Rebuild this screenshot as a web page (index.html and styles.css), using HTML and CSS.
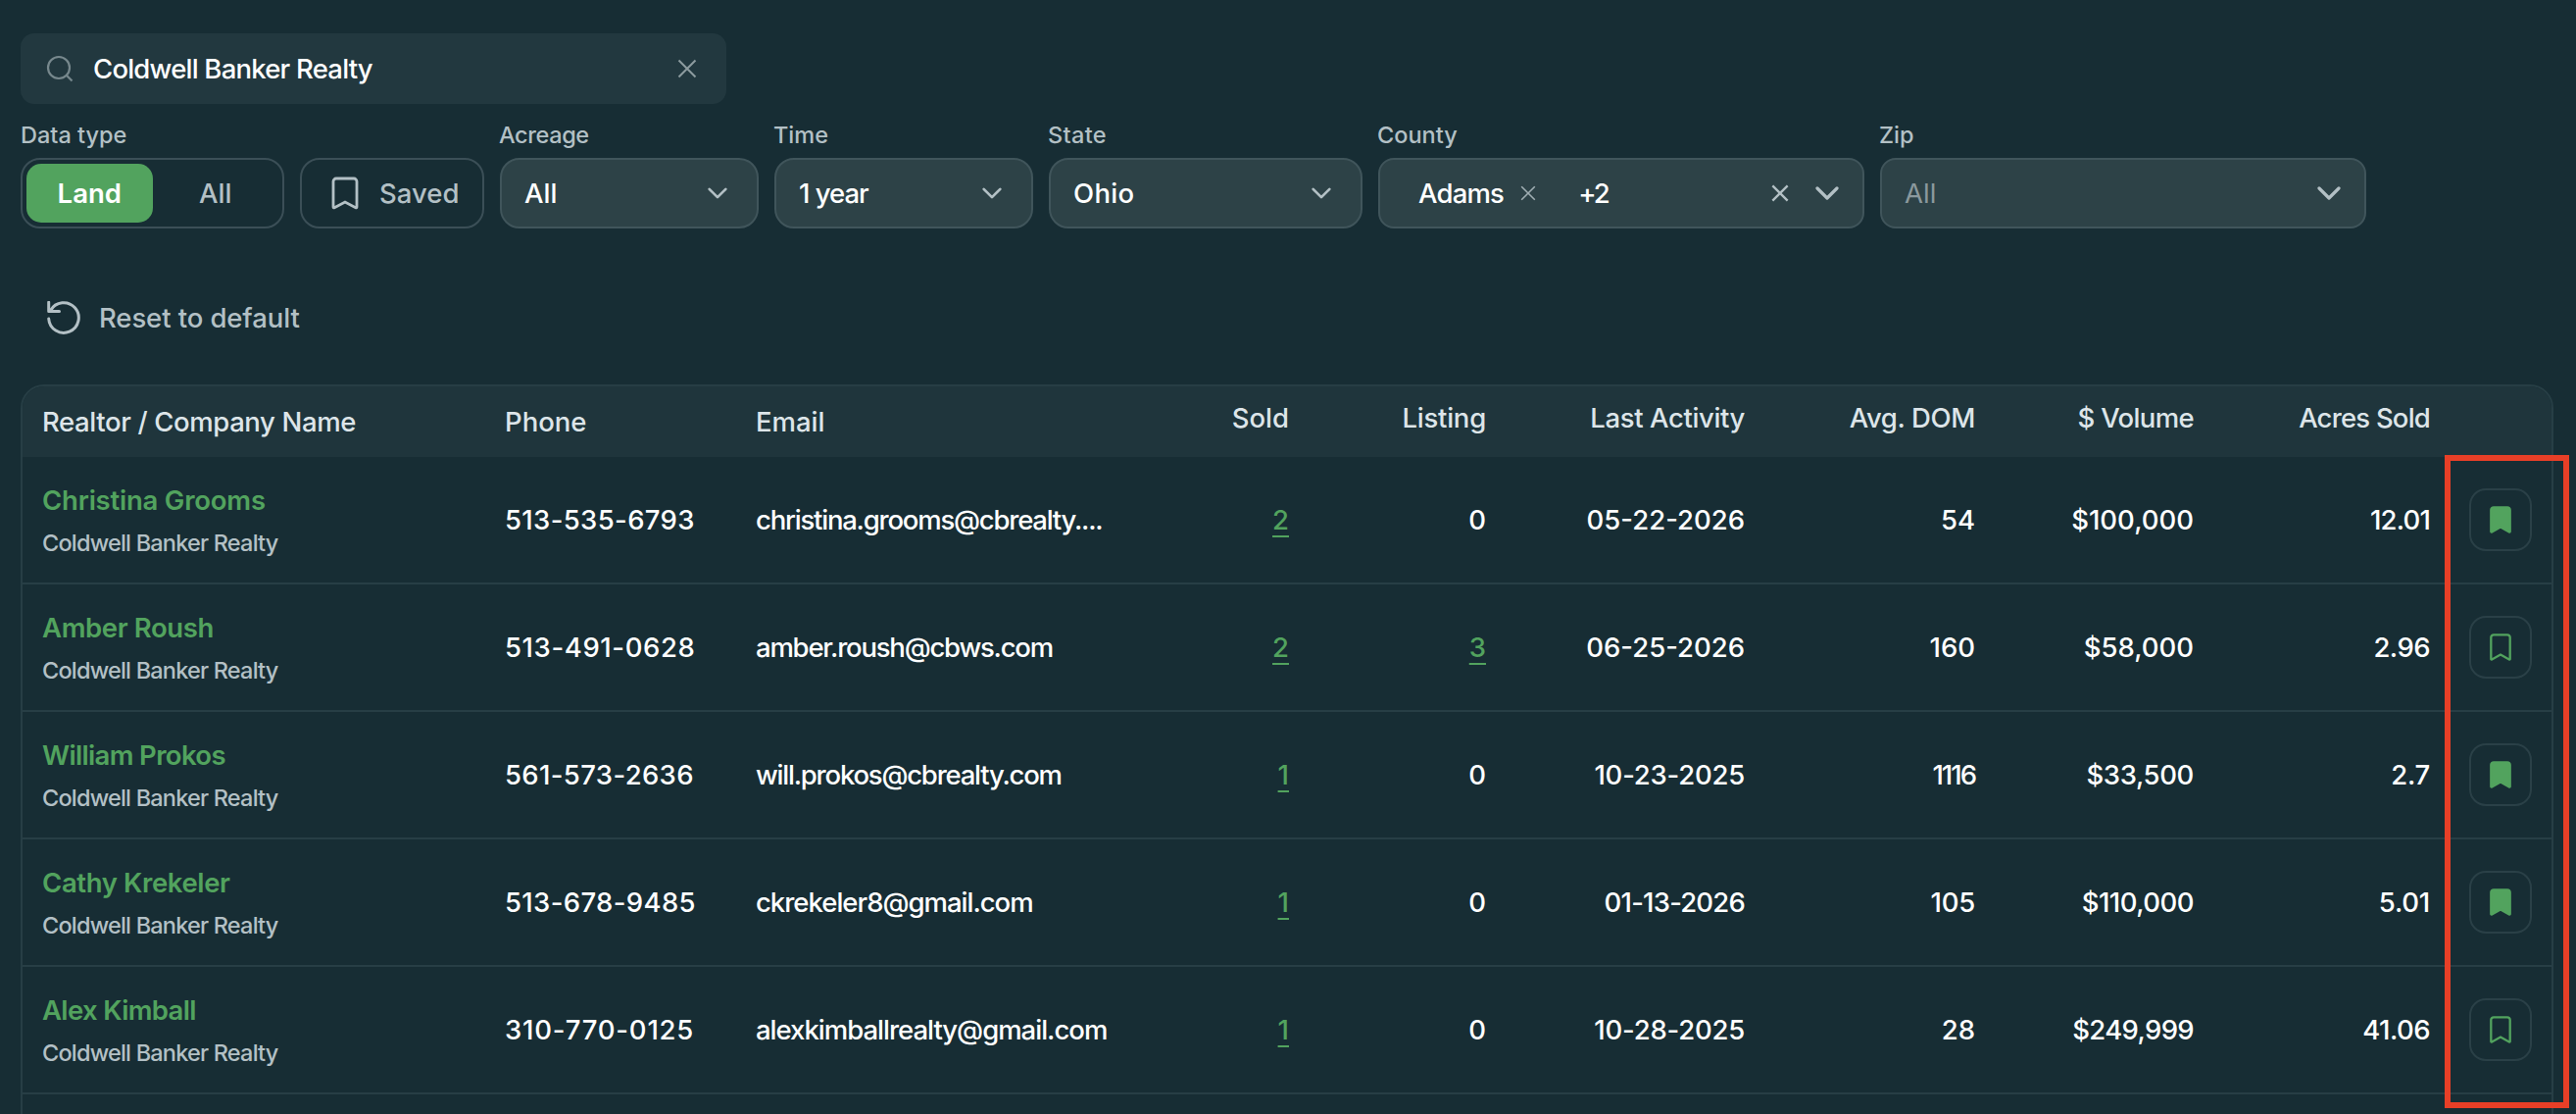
FILE: index.html
```html
<!DOCTYPE html>
<html lang="en">
<head>
<meta charset="utf-8">
<title>Realtors</title>
<link rel="stylesheet" href="styles.css">
</head>
<body>
<svg class="sprite" aria-hidden="true">
  <symbol id="chevron" viewBox="0 0 24 14"><path d="M2 2l10 10L22 2"/></symbol>
  <symbol id="cross" viewBox="0 0 20 20"><path d="M1.5 1.5l17 17M18.5 1.5l-17 17"/></symbol>
  <symbol id="bookmark" viewBox="0 0 22 28"><path d="M1.3 26V4A2.7 2.7 0 0 1 4 1.3h14A2.7 2.7 0 0 1 20.700 4v22q0 .8-.9.400L11 21.600l-8.800 4.800q-.9.400-.9-.400z"/></symbol>
</svg>
<main class="page">
  <div class="search">
    <svg class="search-icon" viewBox="0 0 28 28"><circle cx="13" cy="13" r="11"/><path d="M20.800 20.800l5.700 5.700"/></svg>
    <span class="search-text">Coldwell Banker Realty</span>
    <svg class="search-clear"><use href="#cross"/></svg>
  </div>

  <div class="filters">
    <div class="field type">
      <span class="label">Data type</span>
      <div class="toggle"><span class="seg active">Land</span><span class="seg">All</span></div>
    </div>
    <div class="field saved-field">
      <button class="saved"><svg viewBox="0 0 28 34"><path d="M2 31V5a3 3 0 0 1 3-3h18a3 3 0 0 1 3 3v26q0 1.300-1.200.7L14 26 3.200 31.700Q2 32.300 2 31z"/></svg><span>Saved</span></button>
    </div>
    <div class="field acreage">
      <span class="label k-35">Acreage</span>
      <div class="select"><span>All</span><svg class="chev"><use href="#chevron"/></svg></div>
    </div>
    <div class="field time">
      <span class="label">Time</span>
      <div class="select"><span class="k-100">1 year</span><svg class="chev"><use href="#chevron"/></svg></div>
    </div>
    <div class="field state">
      <span class="label k35">State</span>
      <div class="select"><span class="k35">Ohio</span><svg class="chev"><use href="#chevron"/></svg></div>
    </div>
    <div class="field county">
      <span class="label">County</span>
      <div class="select wide multi"><span class="chip k-80">Adams</span><svg class="chip-x"><use href="#cross"/></svg><span class="more k-200">+2</span><svg class="clear"><use href="#cross"/></svg><svg class="chev big"><use href="#chevron"/></svg></div>
    </div>
    <div class="field zip">
      <span class="label">Zip</span>
      <div class="select wide"><span class="placeholder">All</span><svg class="chev big"><use href="#chevron"/></svg></div>
    </div>
  </div>

  <div class="reset">
    <svg viewBox="0 0 34 34"><path d="M1.700 1.200v9.300h10.800M1.700 18A15.300 15.300 0 1 0 3.600 9.600"/></svg>
    <span>Reset to default</span>
  </div>

  <section class="table">
    <div class="row head">
      <span class="k-35">Realtor / Company Name</span><span>Phone</span><span>Email</span>
      <span class="num">Sold</span><span class="num k-20">Listing</span><span class="num k-35">Last Activity</span><span class="num k-35">Avg. DOM</span><span class="num k-60">$ Volume</span><span class="num k-80">Acres Sold</span>
    </div>
    <div class="row">
      <div class="who"><span class="name k-20">Christina Grooms</span><span class="company">Coldwell Banker Realty</span></div>
      <span class="k35">513-535-6793</span><span class="email">christina.grooms@cbrealty....</span>
      <span class="num"><a class="link">2</a></span><span class="num">0</span><span class="num">05-22-2026</span><span class="num">54</span><span class="num">$100,000</span><span class="num k-80">12.01</span>
      <button class="mark on"><svg><use href="#bookmark"/></svg></button>
    </div>
    <div class="row">
      <div class="who"><span class="name k-35">Amber Roush</span><span class="company">Coldwell Banker Realty</span></div>
      <span class="k60">513-491-0628</span><span class="email">amber.roush@cbws.com</span>
      <span class="num"><a class="link">2</a></span><span class="num"><a class="link">3</a></span><span class="num">06-25-2026</span><span class="num">160</span><span class="num">$58,000</span><span class="num k-50">2.96</span>
      <button class="mark"><svg><use href="#bookmark"/></svg></button>
    </div>
    <div class="row">
      <div class="who"><span class="name k-60">William Prokos</span><span class="company">Coldwell Banker Realty</span></div>
      <span class="k35">561-573-2636</span><span class="email">will.prokos@cbrealty.com</span>
      <span class="num"><a class="link one">1</a></span><span class="num">0</span><span class="num k-20">10-23-2025</span><span class="num k-200">1116</span><span class="num k-35">$33,500</span><span class="num k-20">2.7</span>
      <button class="mark on"><svg><use href="#bookmark"/></svg></button>
    </div>
    <div class="row">
      <div class="who"><span class="name k-35">Cathy Krekeler</span><span class="company">Coldwell Banker Realty</span></div>
      <span class="k35">513-678-9485</span><span class="k-100">ckrekeler8@gmail.com</span>
      <span class="num"><a class="link one">1</a></span><span class="num">0</span><span class="num k-80">01-13-2026</span><span class="num k-20">105</span><span class="num k-50">$110,000</span><span class="num k-20">5.01</span>
      <button class="mark on"><svg><use href="#bookmark"/></svg></button>
    </div>
    <div class="row">
      <div class="who"><span class="name k-60">Alex Kimball</span><span class="company">Coldwell Banker Realty</span></div>
      <span class="k80">310-770-0125</span><span class="k-100">alexkimballrealty@gmail.com</span>
      <span class="num"><a class="link one">1</a></span><span class="num">0</span><span class="num k-20">10-28-2025</span><span class="num">28</span><span class="num k-60">$249,999</span><span class="num k-50">41.06</span>
      <button class="mark"><svg><use href="#bookmark"/></svg></button>
    </div>
    <div class="highlight"></div>
  </section>
</main>
</body>
</html>
```
FILE: styles.css
```css
* { box-sizing: border-box; }

body {
  margin: 0;
  background: #172d34;
  color: #fff;
  font: 450 27.5px/1 Inter, "Liberation Sans", sans-serif;
}

svg { fill: none; stroke: currentColor; flex: none; display: block; }
button { font: inherit; color: inherit; background: none; padding: 0; }
.sprite { position: absolute; width: 0; height: 0; }

.page {
  height: 1136px;
  padding: 34px 23px 0 21px;
  overflow: hidden;
  display: flex;
  flex-direction: column;
}

/* search */
.search {
  width: 720px;
  height: 72px;
  flex: none;
  padding: 0 30px 0 26px;
  border-radius: 14px;
  background: #22383f;
  display: flex;
  align-items: center;
}
.search-icon { width: 28px; height: 28px; stroke-width: 2.2; color: #77888d; }
.search-text { flex: 1; margin-left: 20px; padding-top: 1px; font-weight: 500; letter-spacing: -.78px; }
.search-clear { width: 20px; height: 20px; stroke-width: 2; color: #8d9b9f; }

/* filters */
.filters { display: flex; gap: 16px; align-items: flex-end; height: 127px; flex: none; }
.field { display: flex; flex-direction: column; }
.label { height: 24px; margin: 0 0 11px -1px; font-size: 23.5px; line-height: 24px; font-weight: 500; color: #b3c0c5; }
.type .label { margin-left: 0; }
.type { width: 269px; }
.saved-field { width: 188px; }
.acreage, .time { width: 264px; }
.state { width: 320px; }
.county, .zip { width: 496px; }

.toggle, .saved, .select {
  height: 72px;
  border: 2px solid #3b4f57;
  border-radius: 20px;
  display: flex;
  align-items: center;
  font-weight: 500;
}
.toggle { padding: 4px; }
.seg { flex: 1; height: 60px; padding-top: 1px; border-radius: 15px; display: flex; align-items: center; justify-content: center; color: #b3c0c5; }
.seg.active { background: #52a35e; color: #fff; font-weight: 600; }
.saved { padding-left: 30px; color: #b3c0c5; width: 100%; }
.saved svg { width: 28px; height: 34px; stroke-width: 2.8; margin-right: 21px; }
.saved span, .select span { padding-top: 1px; }
.select { padding: 0 30px 0 23px; background: #2d4247; border-color: #40555b; }
.select .chev { width: 20px; height: 12px; margin-left: auto; stroke-width: 3.200; stroke-linecap: round; stroke-linejoin: round; color: #b3c0c5; }
.wide { border-radius: 16px; padding-right: 24px; }
.select .big { width: 24px; height: 14px; }
.multi { padding-left: 39px; }
.chip-x { width: 16px; height: 16px; margin-left: 17px; stroke-width: 2; color: #9fadb2; }
.more { margin-left: 43px; }
.clear { width: 18px; height: 18px; margin-left: auto; stroke-width: 2.600; color: #b3c0c5; }
.multi .big { margin-left: 27px; }
.placeholder { color: #8b999d; font-weight: 400; }

/* reset */
.reset { height: 34px; margin: 74px 0 51px 27px; flex: none; display: flex; align-items: center; gap: 19px; font-weight: 500; color: #b3c0c5; }
.reset span { padding-top: 1px; letter-spacing: -.1px; }
.reset svg { width: 34px; height: 34px; stroke-width: 3; stroke-linecap: round; stroke-linejoin: round; }

/* table */
.table {
  position: relative;
  height: 780px;
  flex: none;
  border: 2px solid #273e45;
  border-radius: 24px;
}
.row {
  height: 130px;
  padding: 1px 0 0 20px;
  border-bottom: 2px solid #273e45;
  display: grid;
  grid-template-columns: 472px 256px 443px 101px 201px 264px 235px 223px 241px 104px;
  align-items: center;
  white-space: nowrap;
}
.head { height: 72px; border: 0; border-radius: 22px 22px 0 0; background: #1f353c; color: #dde5e9; }
.num { text-align: right; }
.head .num { padding-bottom: 8px; }
.who { display: flex; flex-direction: column; padding-top: 3px; }
.name { line-height: 43px; font-weight: 600; color: #52a35e; }
.company { font-size: 23.5px; line-height: 44px; letter-spacing: -.8px; color: #b3c0c5; }
.email { letter-spacing: -1.22px; }
.link { display: inline-block; color: #52a35e; font-weight: 500; text-decoration: underline; text-decoration-thickness: 2px; text-underline-offset: 6px; text-decoration-skip-ink: none; }
.mark { width: 64px; height: 64px; margin: -1px 0 0 40px; border: 2px solid #2a4047; border-radius: 17px; color: #52a35e; display: flex; align-items: center; justify-content: center; }
.mark svg { width: 22px; height: 28px; stroke-width: 2.300; }
.mark.on svg { fill: currentColor; }

/* frame around the bookmark column */
.highlight {
  position: absolute;
  top: 70px;
  right: -18px;
  width: 127px;
  height: 666px;
  border: 6px solid #e83f27;
}

/* tracking */
.k-200 { letter-spacing: -2px; }
.k-100 { letter-spacing: -1px; }
.k-80 { letter-spacing: -.8px; }
.k-60 { letter-spacing: -.65px; }
.k-50 { letter-spacing: -.52px; }
.k-35 { letter-spacing: -.38px; }
.k-20 { letter-spacing: -.22px; }
.k35 { letter-spacing: .35px; }
.k60 { letter-spacing: .6px; }
.k80 { letter-spacing: .8px; }
```
